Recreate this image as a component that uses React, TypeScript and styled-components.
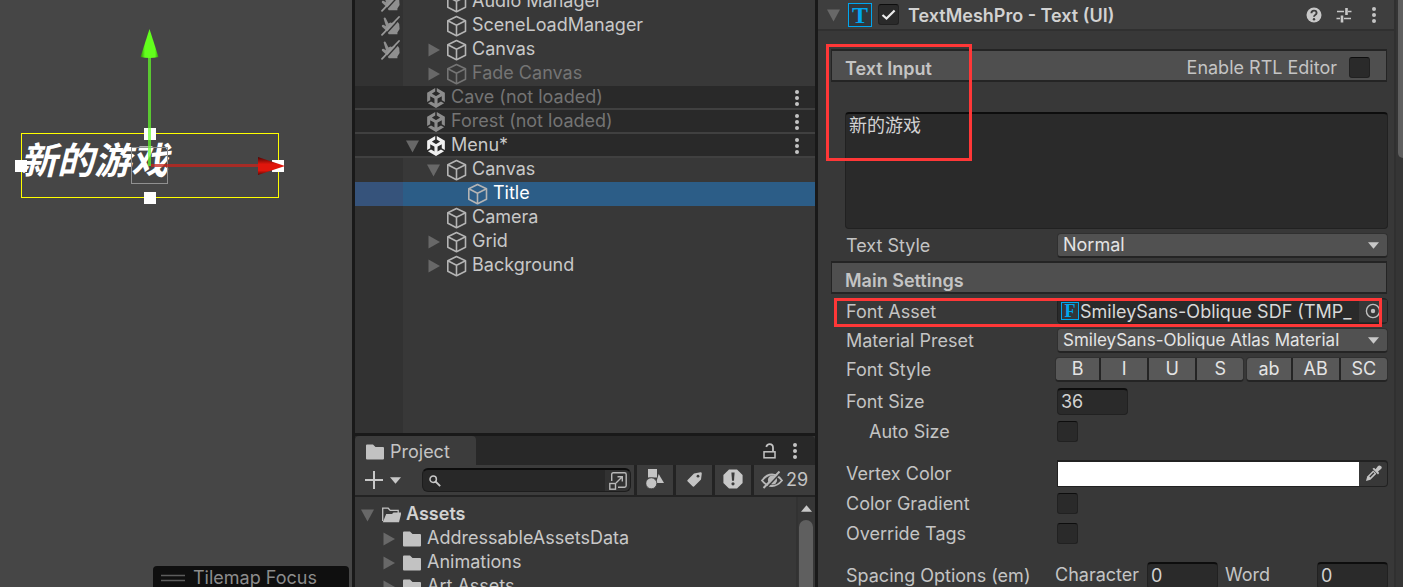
import React from "react";
import styled, { createGlobalStyle, css } from "styled-components";
import { SiUnity } from "react-icons/si";

const GlobalStyle = createGlobalStyle`
  *, *::before, *::after { box-sizing: border-box; }
  html, body { margin: 0; background: #191919; }
  body, button, input, select, textarea {
    font-family: Inter, "Noto Sans CJK SC", sans-serif;
    font-size: 18px;
    line-height: 24px;
    color: #c4c4c4;
  }
  button { border: 0; padding: 0; background: none; }
  svg { display: block; flex: none; }
`;

const Editor = styled.main`
  display: grid;
  grid-template-columns: 352fr 460fr 585fr;
  column-gap: 3px;
  height: 100vh;
  min-height: 480px;
  overflow: hidden;
  background: #191919;
`;

/* ---------- Scene view ---------- */

const SceneView = styled.section`
  position: relative;
  overflow: hidden;
  background: #464646;
`;

const SceneTitle = styled.div`
  position: absolute;
  left: 20px;
  top: 130px;
  font-family: "Noto Sans CJK SC", sans-serif;
  font-size: 37px;
  font-weight: 700;
  font-style: italic;
  line-height: 56px;
  color: #fff;
  white-space: nowrap;
`;

const Gizmo = styled.svg`
  position: absolute;
  left: 0;
  top: 0;
`;

const SceneOverlay = styled.div`
  position: absolute;
  right: 3px;
  bottom: 0;
  display: flex;
  align-items: center;
  gap: 8px;
  width: 196px;
  height: 21px;
  padding: 3px 8px 0;
  border-radius: 4px 4px 0 0;
  background: #0f0f0f;
  color: #8c8c8c;
  white-space: nowrap;
`;

/* ---------- Middle column ---------- */

const MiddleColumn = styled.div`
  display: flex;
  flex-direction: column;
  gap: 3px;
  min-width: 0;
  overflow: hidden;
`;

const Hierarchy = styled.section`
  flex: 433 1 0;
  overflow: hidden;
  background: linear-gradient(to right, #323232 48px, #383838 48px);
`;

const HierarchyList = styled.ul`
  margin: -10px 0 0;
  padding: 0;
  list-style: none;
`;

type Tone = "object" | "scene" | "selected";

const HierarchyRow = styled.li<{ $tone: Tone }>`
  display: flex;
  align-items: center;
  height: 24px;
  ${(p) =>
    p.$tone === "scene" &&
    css`
      background: linear-gradient(to top, #404040 2px, #292929 2px);
    `}
  ${(p) =>
    p.$tone === "selected" &&
    css`
      background: linear-gradient(to right, #36537b 48px, #2c5d87 48px);
    `}
`;

const Gutter = styled.span`
  display: flex;
  justify-content: flex-end;
  width: 48px;
  padding-right: 3px;
`;

const Indent = styled.span<{ $level: number }>`
  display: flex;
  align-items: center;
  flex: 1;
  padding-left: ${(p) => 3 + p.$level * 21}px;
`;

const ArrowSlot = styled.span`
  width: 20px;
`;

const IconSlot = styled.span`
  display: flex;
  justify-content: center;
  width: 20px;
`;

const NodeName = styled.span<{ $color: string; $bold?: boolean }>`
  padding-left: 5px;
  height: 24px;
  line-height: 22px;
  color: ${(p) => p.$color};
  font-weight: ${(p) => (p.$bold ? 600 : 400)};
  white-space: nowrap;
`;

const MenuButton = styled.button`
  display: flex;
  justify-content: center;
  width: 20px;
`;

const RowMenu = styled(MenuButton)`
  margin-right: 8px;
`;

const Project = styled.section`
  display: flex;
  flex-direction: column;
  flex: 151 1 0;
  min-height: 0;
  overflow: hidden;
  background: #383838;
`;

const TabBar = styled.header`
  display: flex;
  align-items: center;
  flex: none;
  height: 29px;
  padding-right: 10px;
  background: #282828;
  border-radius: 0 4px 0 0;
`;

const Tab = styled.button`
  display: flex;
  align-items: center;
  gap: 6px;
  width: 121px;
  height: 29px;
  padding: 2px 11px 0;
  border-radius: 4px 4px 0 0;
  background: #3c3c3c;
`;

const TabActions = styled.div`
  display: flex;
  gap: 6px;
  margin-left: auto;
`;

const Toolbar = styled.div`
  display: flex;
  flex: none;
  gap: 3px;
  height: 32px;
  border-bottom: 2px solid #232323;
  background: #232323;
`;

const ToolGroup = styled.div`
  display: flex;
  align-items: center;
  flex: 1;
  min-width: 0;
  padding: 0 3px 0 10px;
  background: #3c3c3c;
`;

const ToolButton = styled.button<{ $wide?: boolean }>`
  display: flex;
  align-items: center;
  justify-content: center;
  gap: 3px;
  width: ${(p) => (p.$wide ? 61 : 36)}px;
  padding-bottom: ${(p) => (p.$wide ? 0 : 2)}px;
  background: #3c3c3c;
`;

const CreateButton = styled.button`
  display: flex;
  align-items: center;
  gap: 7px;
  margin-right: 21px;
`;

const SearchBox = styled.label`
  display: flex;
  align-items: center;
  flex: 1;
  min-width: 0;
  height: 24px;
  padding: 0 3px 0 6px;
  border: 1px solid #1d1d1d;
  border-top: 2px solid #0d0d0d;
  border-radius: 6px;
  background: linear-gradient(to left, #323232 25px, #282828 25px);
`;

const SearchInput = styled.input`
  flex: 1;
  min-width: 0;
  height: 20px;
  border: 0;
  background: none;
  outline: none;
`;

const ProjectBody = styled.div`
  display: flex;
  flex: 1;
  min-height: 0;
`;

const Tree = styled.ul`
  flex: 1;
  margin: 0;
  padding: 6px 0 0;
  overflow: hidden;
  list-style: none;
`;

const TreeRow = styled.li<{ $level: number }>`
  display: flex;
  align-items: center;
  height: 24px;
  padding-left: ${(p) => 6 + p.$level * 21}px;
`;

const TreeScroll = styled.div`
  display: flex;
  flex-direction: column;
  align-items: center;
  gap: 8px;
  width: 19px;
  padding: 8px 1px 0 0;
  border-left: 2px solid #323232;
  background: #363636;
`;

const TreeThumb = styled.div`
  flex: 1;
  width: 14px;
  border-radius: 7px 7px 0 0;
  background: #5f5f5f;
`;

/* ---------- Inspector ---------- */

const Inspector = styled.section`
  display: flex;
  min-width: 0;
  overflow: hidden;
  background: #383838;
`;

const InspectorBody = styled.div`
  flex: 1;
  min-width: 0;
`;

const InspectorScroll = styled.div`
  width: 9px;
  padding-left: 2px;
  border-left: 2px solid #303030;
  background: #353535;
`;

const InspectorThumb = styled.div`
  height: 27%;
  border-radius: 0 0 0 6px;
  background: #5f5f5f;
`;

const ComponentHeader = styled.header`
  display: flex;
  align-items: center;
  height: 31px;
  padding: 0 10px 0 9px;
  border-bottom: 2px solid #303030;
  background: #3e3e3e;
`;

const ComponentTitle = styled.h1`
  margin: 0 auto 0 9px;
  padding-top: 2px;
  font-size: 18px;
  font-weight: 600;
  line-height: 24px;
  color: #d2d2d2;
`;

const HeaderActions = styled.div`
  display: flex;
  gap: 10px;
`;

const LetterIcon = styled.span<{ $large?: boolean }>`
  display: flex;
  align-items: center;
  justify-content: center;
  flex: none;
  width: ${(p) => (p.$large ? 24 : 18)}px;
  height: ${(p) => (p.$large ? 24 : 18)}px;
  margin: ${(p) => (p.$large ? "0 6px 0 7px" : "0")};
  border: 1px solid #00a6ef;
  background: #31363a;
  color: #00a6ef;
  font-family: "Liberation Serif", serif;
  font-size: ${(p) => (p.$large ? 24 : 18)}px;
  font-weight: 700;
  line-height: 18px;
`;

const CheckWrap = styled.span`
  display: grid;
  width: 21px;
  height: 21px;
  > * {
    grid-area: 1 / 1;
  }
  svg {
    pointer-events: none;
    place-self: center;
  }
`;

const CheckInput = styled.input`
  appearance: none;
  width: 21px;
  height: 21px;
  margin: 0;
  border: 1px solid #212121;
  border-top-color: #0d0d0d;
  border-radius: 3px;
  background: #2a2a2a;
`;

const SectionBar = styled.div`
  display: flex;
  align-items: center;
  justify-content: space-between;
  height: 33px;
  margin: 0 7px 0 13px;
  padding: 3px 16px 0 13px;
  border: solid #242424;
  border-width: 2px 1px;
  background: #4f4f4f;
`;

const TextSection = styled.div`
  padding-top: 18px;
`;

const SectionTitle = styled.h2`
  margin: 0;
  padding-top: 4px;
  font-size: 18px;
  font-weight: 600;
  line-height: 24px;
`;

const RtlLabel = styled.label`
  display: flex;
  align-items: center;
  gap: 12px;
`;

const RtlText = styled.span`
  padding-top: 2px;
`;

const Fields = styled.div<{ $top: number; $bottom?: number }>`
  padding: ${(p) => p.$top}px 6px ${(p) => p.$bottom ?? 0}px 27px;
`;

const TextBox = styled.textarea`
  display: block;
  width: 100%;
  height: 117px;
  margin: 0;
  padding: 0 3px;
  border: 1px solid #212121;
  border-top: 2px solid #0d0d0d;
  border-radius: 4px;
  background: #2a2a2a;
  color: #d2d2d2;
  resize: none;
  outline: none;
`;

const FieldRow = styled.div<{ $height?: number }>`
  display: flex;
  align-items: center;
  height: ${(p) => p.$height ?? 30}px;
`;

const FieldLabel = styled.label<{ $nested?: boolean }>`
  flex: none;
  width: 212px;
  padding-top: 2px;
  padding-left: ${(p) => (p.$nested ? 24 : 1)}px;
  white-space: nowrap;
`;

const SelectWrap = styled.span`
  display: grid;
  flex: 1;
  align-items: center;
  > * {
    grid-area: 1 / 1;
  }
  svg {
    justify-self: end;
    margin-right: 9px;
    pointer-events: none;
  }
`;

const Select = styled.select<{ $small?: boolean }>`
  appearance: none;
  width: 100%;
  height: 25px;
  padding: 0 28px 0 5px;
  border: 1px solid #303030;
  border-bottom: 2px solid #242424;
  border-radius: 4px;
  background: #515151;
  color: #e4e4e4;
  font-size: ${(p) => (p.$small ? 17 : 18)}px;
  line-height: 22px;
`;

const ObjectField = styled.div`
  display: flex;
  align-items: center;
  flex: 1;
  min-width: 0;
  height: 26px;
  padding-left: 3px;
  border: 1px solid #212121;
  border-radius: 4px;
  background: #2a2a2a;
  color: #d8d8d8;
`;

const ObjectName = styled.span`
  flex: 1;
  min-width: 0;
  padding-top: 2px;
  padding-left: 1px;
  white-space: nowrap;
`;

const PickerButton = styled.button`
  display: flex;
  align-items: center;
  justify-content: center;
  width: 28px;
  height: 22px;
  background: #373737;
`;

const StyleButtons = styled.div`
  display: flex;
  flex: 1;
  gap: 2px;
  margin-left: -2px;
`;

const StyleGroup = styled.div<{ $count: number }>`
  display: flex;
  gap: 2px;
  flex: ${(p) => p.$count * 48 - 4} 1 0;
  height: 25px;
  border: 1px solid #303030;
  border-bottom: 2px solid #242424;
  border-radius: 4px;
  overflow: hidden;
  background: #242424;
`;

const StyleButton = styled.button`
  flex: 46 1 0;
  background: #585858;
  color: #e4e4e4;
  line-height: 22px;
  &:first-child {
    flex-grow: 43;
  }
`;

const NumberInput = styled.input`
  width: 71px;
  height: 27px;
  padding: 0 3px;
  border: 1px solid #212121;
  border-top: 2px solid #0d0d0d;
  border-radius: 4px;
  background: #2a2a2a;
  color: #d2d2d2;
  outline: none;
`;

const ColorField = styled.div`
  display: flex;
  flex: 1;
  height: 27px;
  border: 1px solid #212121;
  border-top-width: 2px;
  border-radius: 0 4px 4px 0;
`;

const ColorInput = styled.input`
  appearance: none;
  flex: 1;
  min-width: 0;
  height: 24px;
  padding: 0;
  border: 0;
  background: #fff;
  &::-webkit-color-swatch-wrapper {
    padding: 0;
  }
  &::-webkit-color-swatch {
    border: 0;
  }
`;

const DropperButton = styled.button`
  display: flex;
  align-items: center;
  justify-content: center;
  width: 28px;
`;

const Gap = styled.div<{ $size: number }>`
  height: ${(p) => p.$size}px;
`;

const SpacingFields = styled.div`
  display: flex;
  align-items: center;
  flex: 1;
  margin-left: -2px;
  gap: 7px;
`;

const SpacingField = styled.label`
  display: flex;
  align-items: center;
  justify-content: space-between;
  flex: 1;
`;

/* Red callouts drawn over the inspector */
const Anchor = styled.div`
  position: relative;
`;

const Callout = styled.div<{ $area: "input" | "asset" }>`
  position: absolute;
  border: 3px solid #ff3737;
  pointer-events: none;
  ${(p) =>
    p.$area === "input"
      ? css`
          left: 8px;
          top: 13px;
          width: 146px;
          height: 117px;
        `
      : css`
          left: -11px;
          right: 6px;
          top: 2px;
          height: 29px;
        `}
`;

/* ---------- Drawings ---------- */

const Arrow = ({ open }: { open?: boolean }) => (
  <svg width="14" height="14" viewBox="0 0 14 14" fill="#686868">
    <path d={open ? "M0 1.5H13L6.5 13.5Z" : "M1.5 0.5L13 7L1.5 13.5Z"} />
  </svg>
);

const Cube = ({ color }: { color: string }) => (
  <svg width="20" height="22" viewBox="0.5 0 20 22" fill="none" stroke={color} strokeWidth="1.6" strokeLinejoin="round">
    <path d="M10 1.5L19 5.8V16.2L10 20.8L1.3 16.2V5.8Z" />
    <path d="M1.3 5.8L10 10.3L19 5.8M10 10.3V20.8" />
  </svg>
);

const Caret = () => (
  <svg width="11" height="7" viewBox="0 0 11 7" fill="#c8c8c8">
    <path d="M0 0.3H11L5.5 6.7Z" />
  </svg>
);

const Dots = () => (
  <svg width="4" height="16" viewBox="0 0 4 16" fill="#c4c4c4">
    <circle cx="2" cy="2" r="2" />
    <circle cx="2" cy="8" r="2" />
    <circle cx="2" cy="14" r="2" />
  </svg>
);

const PickingOff = () => (
  <svg width="19" height="20" viewBox="0 0 19 20">
    <path
      d="M2.6 2.4C3 1.2 4.4 1.2 4.9 2.4L7.4 7.4L9.4 6.4L11 6.9L13 5.8L14.6 6.4L16.6 5.8L18.2 8L18.6 13L16.4 16.4V18.2H7.8L5.6 15L1 10.8C0.4 9.4 1.4 8.4 2.8 9L5 10.2Z"
      fill="#8f8f8f"
    />
    <path d="M19.4 2L3 20" stroke="#323232" strokeWidth="1.4" />
    <path d="M18 1L1 18.8" stroke="#989898" strokeWidth="1.8" strokeLinecap="round" />
  </svg>
);

const Folder = () => (
  <svg width="18" height="16" viewBox="0 0 18 16" fill="#c2c2c2">
    <path d="M0 1.5Q0 .5 1 .5H7L9.5 3H17Q18 3 18 4V14.5Q18 15.5 17 15.5H1Q0 15.5 0 14.5Z" />
  </svg>
);

const OpenFolder = () => (
  <svg width="20" height="16" viewBox="0 0 20 16">
    <path d="M1.7 14V1.2H7.2L9.2 3.4H17.2V6" fill="none" stroke="#c2c2c2" strokeWidth="1.3" />
    <path d="M5.2 7L11 7L12.5 5.5H20.5L18 15.2H1.8Z" fill="#c2c2c2" />
  </svg>
);

const Lock = () => (
  <svg width="13" height="16" viewBox="0 0 13 16" fill="none" stroke="#c4c4c4">
    <rect x="1" y="8.8" width="11" height="6" strokeWidth="1.5" />
    <path d="M10 8.5V4.8Q10 1.2 6.6 1.2Q4.3 1.2 3.2 3.8" strokeWidth="1.8" />
  </svg>
);

const Plus = () => (
  <svg width="18" height="18" viewBox="0 0 18 18" stroke="#c8c8c8" strokeWidth="2">
    <path d="M9 0V18M0 9H18" />
  </svg>
);

const Magnifier = () => (
  <svg width="12" height="12" viewBox="0 0 12 12" fill="none" stroke="#c8c8c8" strokeWidth="1.5">
    <circle cx="4.2" cy="4.2" r="3.2" />
    <path d="M6.5 6.5L11.2 11.2" strokeWidth="1.8" />
  </svg>
);

const PopOut = () => (
  <svg width="18" height="18" viewBox="0 0 18 18" fill="none" stroke="#b8b8b8" strokeWidth="1.4">
    <path d="M2.7 9V2.4Q2.7 .8 4.3 .8H15.6Q17.2 .8 17.2 2.4V13.6Q17.2 15.2 15.6 15.2H9" />
    <rect x=".8" y="11.5" width="5.7" height="5.7" />
    <path d="M7 11L13 5M8.5 4.7H13.3V9.5" />
  </svg>
);

const Shapes = () => (
  <svg width="18" height="20" viewBox="0 0 18 20" fill="#c4c4c4">
    <rect x="2" y="0" width="9" height="8.5" />
    <path d="M12.7 5L18 14H10Z" />
    <circle cx="5.3" cy="14.3" r="5.5" stroke="#3c3c3c" strokeWidth="0.8" />
  </svg>
);

const Tag = () => (
  <svg width="15" height="15" viewBox="0 0 15 15">
    <path d="M7 1.5L13.5 .3Q14.8 .2 14.8 1.5L14 7.5L7 14.5Q6.2 15 5.5 14.3L.5 9.3Q0 8.6 .6 8Z" fill="#c4c4c4" />
    <circle cx="11" cy="4.2" r="1.4" fill="#3c3c3c" />
  </svg>
);

const Alert = () => (
  <svg width="20" height="20" viewBox="0 0 20 20">
    <path d="M6 .4H14L19.6 6V14L14 19.6H6L.4 14V6Z" fill="#c8c8c8" />
    <path d="M8.4 3.5H11.6L11 11.8H9Z" fill="#3c3c3c" />
    <circle cx="10" cy="14.8" r="1.6" fill="#3c3c3c" />
  </svg>
);

const HiddenEye = () => (
  <svg width="22" height="18" viewBox="0 0 22 18" fill="none" stroke="#b8b8b8" strokeWidth="1.8">
    <path d="M1 9.5Q5.5 3.5 11 3.5T21 9.5Q16.5 15 11 15T1 9.5Z" />
    <circle cx="11.5" cy="9" r="4.6" fill="#b8b8b8" stroke="none" />
    <path d="M20 1.5L4.5 18" stroke="#3c3c3c" strokeWidth="1.6" />
    <path d="M18.5 .5L2.5 17" strokeWidth="2" />
  </svg>
);

const Help = () => (
  <svg width="16" height="16" viewBox="0 0 16 16">
    <circle cx="8" cy="8" r="7.5" fill="#c8c8c8" />
    <path d="M5.4 6.3Q5.4 3.6 8 3.6T10.6 6Q10.6 7.2 9.2 8Q8 8.7 8 9.8" fill="none" stroke="#3e3e3e" strokeWidth="1.9" />
    <circle cx="8" cy="12.2" r="1.2" fill="#3e3e3e" />
  </svg>
);

const Presets = () => (
  <svg width="16" height="16" viewBox="0 0 16 16" stroke="#c8c8c8" fill="none">
    <path d="M1 4.6H8M12 4.6H15.5M.5 11.6H4M8 11.6H15" strokeWidth="1.5" />
    <path d="M10.5 1V8M6 8.5V15.5" strokeWidth="2.6" />
  </svg>
);

const Tick = () => (
  <svg width="15" height="12" viewBox="0 0 15 12" fill="none" stroke="#ececec" strokeWidth="2.2">
    <path d="M1.5 6L5.5 9.6L13.6 1.4" />
  </svg>
);

const Target = () => (
  <svg width="16" height="16" viewBox="0 0 16 16">
    <circle cx="8" cy="8" r="6.6" fill="none" stroke="#c0c0c0" strokeWidth="1.4" />
    <circle cx="8" cy="8" r="2.2" fill="#c0c0c0" />
  </svg>
);

const Dropper = () => (
  <svg width="17" height="17" viewBox="0 0 17 17">
    <path d="M1 16L2.2 11.6L8.2 5.6L11.4 8.8L5.4 14.8Z" fill="#c4c4c4" />
    <path d="M4.8 12L9 7.8" stroke="#383838" strokeWidth="1.4" />
    <path d="M7.5 3.8L9 2.8L10.6 4.2L13 1Q14.5 0 16 1.2T16 4L13 6.4L14.2 8L13 9.4Z" fill="#c4c4c4" />
  </svg>
);

const SceneGizmo = () => (
  <Gizmo width="300" height="220" viewBox="0 0 300 220">
    <defs>
      <linearGradient id="coneUp">
        <stop offset="0" stopColor="#2f8a08" />
        <stop offset=".25" stopColor="#62ff1c" />
        <stop offset=".8" stopColor="#62ff1c" />
        <stop offset="1" stopColor="#2f9a08" />
      </linearGradient>
      <linearGradient id="coneRight" x1="0" y1="0" x2="0" y2="1">
        <stop offset="0" stopColor="#4a0604" />
        <stop offset=".4" stopColor="#e0160c" />
        <stop offset=".75" stopColor="#e0160c" />
        <stop offset="1" stopColor="#5a0804" />
      </linearGradient>
    </defs>
    <rect x="21.5" y="133.5" width="257" height="64" fill="none" stroke="#ffff00" />
    <rect x="131.5" y="147.5" width="36" height="36" fill="none" stroke="#909090" />
    <g fill="#fff">
      <rect x="144" y="128" width="12" height="12" />
      <rect x="144" y="192" width="12" height="12" />
      <rect x="15" y="160" width="12" height="12" />
      <rect x="272" y="160" width="12" height="12" />
    </g>
    <rect x="148" y="57" width="3" height="109" fill="#62ff28" fillOpacity=".7" />
    <rect x="151" y="164" width="107" height="3" fill="#c8241c" fillOpacity=".75" />
    <path d="M149.5 29L158.5 57Q149.5 59 140.5 57Z" fill="url(#coneUp)" />
    <path d="M285 166L258 157V175Z" fill="url(#coneRight)" />
  </Gizmo>
);

/* ---------- Data ---------- */

type HierarchyNode = {
  name: string;
  level: number;
  scene?: boolean;
  arrow?: "open" | "closed";
  dim?: boolean;
  pickingOff?: boolean;
  selected?: boolean;
};

const nodes: HierarchyNode[] = [
  { name: "Audio Manager", level: 1, pickingOff: true },
  { name: "SceneLoadManager", level: 1, pickingOff: true },
  { name: "Canvas", level: 1, arrow: "closed", pickingOff: true },
  { name: "Fade Canvas", level: 1, arrow: "closed", dim: true },
  { name: "Cave (not loaded)", level: 0, scene: true, dim: true },
  { name: "Forest (not loaded)", level: 0, scene: true, dim: true },
  { name: "Menu*", level: 0, scene: true, arrow: "open" },
  { name: "Canvas", level: 1, arrow: "open" },
  { name: "Title", level: 2, selected: true },
  { name: "Camera", level: 1 },
  { name: "Grid", level: 1, arrow: "closed" },
  { name: "Background", level: 1, arrow: "closed" },
];

const folders = ["AddressableAssetsData", "Animations", "Art Assets"];

const nodeColor = (n: HierarchyNode) => (n.selected ? "#ffffff" : n.dim ? "#747474" : "#c8c8c8");

const Check = ({ id, checked }: { id: string; checked?: boolean }) => (
  <CheckWrap>
    <CheckInput id={id} type="checkbox" defaultChecked={checked} />
    {checked && <Tick />}
  </CheckWrap>
);

const CheckRow = ({ id, label, nested, height }: { id: string; label: string; nested?: boolean; height?: number }) => (
  <FieldRow $height={height}>
    <FieldLabel htmlFor={id} $nested={nested}>
      {label}
    </FieldLabel>
    <Check id={id} />
  </FieldRow>
);

export default function App() {
  return (
    <>
      <GlobalStyle />
      <Editor>
        <SceneView>
          <SceneTitle>新的游戏</SceneTitle>
          <SceneGizmo />
          <SceneOverlay>
            <svg width="24" height="8" viewBox="0 0 24 8" stroke="#5c5c5c" strokeWidth="1.5">
              <path d="M0 1.5H24M0 6.5H24" />
            </svg>
            Tilemap Focus
          </SceneOverlay>
        </SceneView>

        <MiddleColumn>
          <Hierarchy>
            <HierarchyList>
              {nodes.map((n, i) => (
                <HierarchyRow key={i} $tone={n.scene ? "scene" : n.selected ? "selected" : "object"}>
                  <Gutter>{n.pickingOff && <PickingOff />}</Gutter>
                  <Indent $level={n.level}>
                    <ArrowSlot>{n.arrow && <Arrow open={n.arrow === "open"} />}</ArrowSlot>
                    <IconSlot>
                      {n.scene ? (
                        <SiUnity size={20} color={n.dim ? "#8c8c8c" : "#f0f0f0"} />
                      ) : (
                        <Cube color={n.dim ? "#747474" : "#b4b4b4"} />
                      )}
                    </IconSlot>
                    <NodeName $color={nodeColor(n)}>{n.name}</NodeName>
                  </Indent>
                  {n.scene && (
                    <RowMenu aria-label={`${n.name} menu`}>
                      <Dots />
                    </RowMenu>
                  )}
                </HierarchyRow>
              ))}
            </HierarchyList>
          </Hierarchy>

          <Project>
            <TabBar>
              <Tab>
                <Folder />
                Project
              </Tab>
              <TabActions>
                <MenuButton aria-label="Lock">
                  <Lock />
                </MenuButton>
                <MenuButton aria-label="Project menu">
                  <Dots />
                </MenuButton>
              </TabActions>
            </TabBar>
            <Toolbar>
              <ToolGroup>
                <CreateButton aria-label="Create">
                  <Plus />
                  <Caret />
                </CreateButton>
                <SearchBox>
                  <Magnifier />
                  <SearchInput type="text" aria-label="Search assets" />
                  <PopOut />
                </SearchBox>
              </ToolGroup>
              <ToolButton aria-label="Filter by type">
                <Shapes />
              </ToolButton>
              <ToolButton aria-label="Filter by label">
                <Tag />
              </ToolButton>
              <ToolButton aria-label="Filter by import log">
                <Alert />
              </ToolButton>
              <ToolButton $wide>
                <HiddenEye />
                29
              </ToolButton>
            </Toolbar>
            <ProjectBody>
              <Tree>
                <TreeRow $level={0}>
                  <ArrowSlot>
                    <Arrow open />
                  </ArrowSlot>
                  <IconSlot>
                    <OpenFolder />
                  </IconSlot>
                  <NodeName $color="#d2d2d2" $bold>
                    Assets
                  </NodeName>
                </TreeRow>
                {folders.map((name) => (
                  <TreeRow key={name} $level={1}>
                    <ArrowSlot>
                      <Arrow />
                    </ArrowSlot>
                    <IconSlot>
                      <Folder />
                    </IconSlot>
                    <NodeName $color="#c8c8c8">{name}</NodeName>
                  </TreeRow>
                ))}
              </Tree>
              <TreeScroll>
                <svg width="11" height="7" viewBox="0 0 11 7" fill="#c8c8c8">
                  <path d="M0 6.8H11L5.5 .2Z" />
                </svg>
                <TreeThumb />
              </TreeScroll>
            </ProjectBody>
          </Project>
        </MiddleColumn>

        <Inspector>
          <InspectorBody>
            <ComponentHeader>
              <Arrow open />
              <LetterIcon $large>T</LetterIcon>
              <Check id="component-enabled" checked />
              <ComponentTitle>
                <label htmlFor="component-enabled">TextMeshPro - Text (UI)</label>
              </ComponentTitle>
              <HeaderActions>
                <MenuButton aria-label="Help">
                  <Help />
                </MenuButton>
                <MenuButton aria-label="Presets">
                  <Presets />
                </MenuButton>
                <MenuButton aria-label="Component menu">
                  <Dots />
                </MenuButton>
              </HeaderActions>
            </ComponentHeader>

            <Anchor>
              <TextSection>
                <SectionBar>
                  <SectionTitle>Text Input</SectionTitle>
                  <RtlLabel htmlFor="rtl">
                    <RtlText>Enable RTL Editor</RtlText>
                    <Check id="rtl" />
                  </RtlLabel>
                </SectionBar>
              </TextSection>
              <Fields $top={30} $bottom={1}>
                <TextBox aria-label="Text Input" defaultValue="新的游戏" />
              </Fields>
              <Callout $area="input" />
            </Anchor>
            <Fields $top={0} $bottom={1}>
              <FieldRow>
                <FieldLabel htmlFor="text-style">Text Style</FieldLabel>
                <SelectWrap>
                  <Select id="text-style">
                    <option>Normal</option>
                  </Select>
                  <Caret />
                </SelectWrap>
              </FieldRow>
            </Fields>

            <SectionBar>
              <SectionTitle>Main Settings</SectionTitle>
            </SectionBar>
            <Fields $top={2}>
              <Anchor>
                <FieldRow>
                  <FieldLabel as="span">Font Asset</FieldLabel>
                  <ObjectField>
                    <LetterIcon>F</LetterIcon>
                    <ObjectName>SmileySans-Oblique SDF (TMP_</ObjectName>
                    <PickerButton aria-label="Select font asset">
                      <Target />
                    </PickerButton>
                  </ObjectField>
                </FieldRow>
                <Callout $area="asset" />
              </Anchor>
              <FieldRow $height={28}>
                <FieldLabel htmlFor="material">Material Preset</FieldLabel>
                <SelectWrap>
                  <Select id="material" $small>
                    <option>SmileySans-Oblique Atlas Material</option>
                  </Select>
                  <Caret />
                </SelectWrap>
              </FieldRow>
              <FieldRow>
                <FieldLabel as="span">Font Style</FieldLabel>
                <StyleButtons>
                  {[
                    ["B", "I", "U", "S"],
                    ["ab", "AB", "SC"],
                  ].map((group) => (
                    <StyleGroup key={group[0]} $count={group.length}>
                      {group.map((s) => (
                        <StyleButton key={s}>{s}</StyleButton>
                      ))}
                    </StyleGroup>
                  ))}
                </StyleButtons>
              </FieldRow>
              <FieldRow $height={34}>
                <FieldLabel htmlFor="font-size">Font Size</FieldLabel>
                <NumberInput id="font-size" defaultValue="36" />
              </FieldRow>
              <CheckRow id="auto-size" label="Auto Size" nested height={26} />
              <Gap $size={14} />
              <FieldRow>
                <FieldLabel htmlFor="vertex-color">Vertex Color</FieldLabel>
                <ColorField>
                  <ColorInput id="vertex-color" type="color" defaultValue="#ffffff" />
                  <DropperButton aria-label="Pick color">
                    <Dropper />
                  </DropperButton>
                </ColorField>
              </FieldRow>
              <CheckRow id="color-gradient" label="Color Gradient" />
              <CheckRow id="override-tags" label="Override Tags" />
              <Gap $size={12} />
              <FieldRow>
                <FieldLabel as="span">Spacing Options (em)</FieldLabel>
                <SpacingFields>
                  <SpacingField>
                    Character
                    <NumberInput defaultValue="0" />
                  </SpacingField>
                  <SpacingField>
                    Word
                    <NumberInput defaultValue="0" />
                  </SpacingField>
                </SpacingFields>
              </FieldRow>
            </Fields>
          </InspectorBody>
          <InspectorScroll>
            <InspectorThumb />
          </InspectorScroll>
        </Inspector>
      </Editor>
    </>
  );
}
